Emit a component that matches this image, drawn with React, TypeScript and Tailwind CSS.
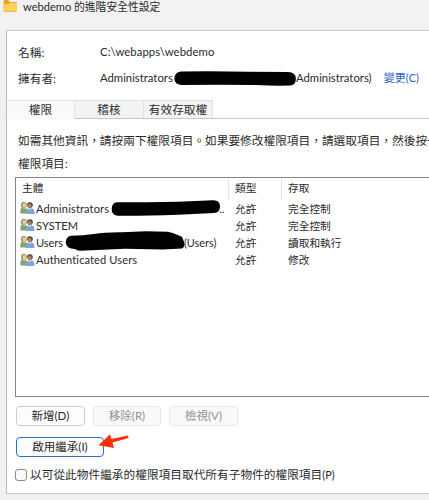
import type { ReactNode } from "react";

const rows = [
  { name: "Administrators", type: "允許", access: "完全控制", spacing: "tracking-[0.12px]" },
  { name: "SYSTEM", type: "允許", access: "完全控制", spacing: "tracking-[0.05px]" },
  { name: "Users", type: "允許", access: "讀取和執行", spacing: "tracking-[-0.1px]" },
  { name: "Authenticated Users", type: "允許", access: "修改", spacing: "tracking-[0.1px]" },
];

function FolderIcon() {
  return (
    <svg width="15" height="14" viewBox="0 0 15 14" className="shrink-0">
      <path d="M0.5 2.2Q0.5 1 1.7 1H5.2L7 3H13Q14 3 14 4V11H0.5Z" fill="#e9a52b" />
      <path d="M0.5 5H5.5L7 3.8H13.2Q14 3.8 14 4.7V12Q14 13 13 13H1.5Q0.5 13 0.5 12Z" fill="#ffd15c" />
      <path d="M1 12.6H13.6" stroke="#eab33d" strokeWidth="0.8" />
    </svg>
  );
}

function UsersIcon() {
  return (
    <svg width="15" height="14" viewBox="0 0 15 14" className="-mt-px shrink-0">
      <path d="M0.4 12.5V9.5Q0.5 6.6 3.5 6.6Q7 6.6 7 9.7V12.5Z" fill="#7ea56f" />
      <path d="M1 5.2Q0.5 0.7 3.9 0.7Q7.2 0.7 6.7 5.2L5.4 7H2.2Z" fill="#9a9668" />
      <ellipse cx="4.3" cy="4.2" rx="1.8" ry="2.5" fill="#e6cc9e" />
      <path d="M3.2 7.1L4.2 8.2L5.1 7.1" fill="#f4e5c8" />
      <path d="M6 13V10.2Q6.2 7.4 9.8 7.3Q14.4 7.2 14.4 10.7V13Z" fill="#7ba6da" />
      <path d="M7.2 4.8Q6.6 1.5 9.5 1.3Q13.2 1 12.8 5L11.5 6.8H8.3Z" fill="#4b4b4b" />
      <ellipse cx="9.6" cy="4.9" rx="2" ry="2.5" fill="#b3805c" />
      <path d="M8.5 7.4L9.7 9.3L11.1 7.4Z" fill="#e4edf8" />
    </svg>
  );
}

function Button({ children, className }: { children: ReactNode; className: string }) {
  return (
    <button className={`flex h-[20px] items-center justify-center rounded-[4px] border pb-px text-[11.5px] ${className}`}>
      {children}
    </button>
  );
}

export default function App() {
  return (
    <div className="flex h-[500px] w-[429px] flex-col overflow-hidden bg-[#f0f0f0] font-['Lato','Noto_Sans_CJK_TC',sans-serif] text-[11.7px] leading-[16px] whitespace-nowrap text-[#2a2a2a]">
      <header className="flex h-[30px] shrink-0 items-start bg-[#f2f2f2] pl-[3px]">
        <div className="-mt-px"><FolderIcon /></div>
        <span className="ml-[5px] -mt-px w-[51px] text-[11.1px]">webdemo</span>
        <span className="-mt-px text-[10.8px]">的進階安全性設定</span>
      </header>

      <main className="ml-[6px] flex h-[464px] w-[423px] shrink-0 flex-col border-y border-l border-y-[#c8c8c8] border-l-[#bdbdbd] bg-white">
        <section className="flex h-[69px] shrink-0 flex-col pt-[13px] pl-[11px]">
          <div className="flex h-[26px]">
            <span className="w-[82px]">名稱:</span>
            <span className="text-[11.3px] tracking-[0.08px]">C:\webapps\webdemo</span>
          </div>
          <div className="flex">
            <span className="w-[82px] shrink-0">擁有者:</span>
            <span className="w-[74px] shrink-0 text-[11.3px]">Administrators</span>
            <svg width="122" height="16" viewBox="174 69 122 16" className="shrink-0">
              <path d="M181 70.5L208 70.3Q248 71 288 71Q295.5 71 295.8 77.5Q296 84 290 84.6Q274 85.1 256 84Q218 83.3 182 84Q174.5 83.6 174.3 77.5Q174.5 71.5 181 70.5Z" fill="#000" />
            </svg>
            <span className="text-[11.3px]">Administrators)</span>
            <a className="ml-auto pr-[10px] text-[11px] text-[#2861c5]">變更(C)</a>
          </div>
        </section>

        <nav className="flex h-[19px] shrink-0 items-stretch border-b border-[#c8c8c8]">
          <div className="-mb-px flex w-[68px] items-center justify-center border-t border-r border-[#e5e5e5] bg-[#fafafa] pb-[2px]">權限</div>
          <div className="flex w-[69px] items-center justify-center border-t border-r border-[#e1e1e1] bg-[#f3f3f3] pb-px">稽核</div>
          <div className="flex w-[69px] items-center justify-center border-t border-r border-[#e1e1e1] bg-[#f3f3f3] pb-px">有效存取權</div>
        </nav>

        <section className="flex flex-col pl-[8px]">
          <p className="mt-[13px] ml-[3px]">如需其他資訊，請按兩下權限項目。如果要修改權限項目，請選取項目，然後按一</p>
          <p className="mt-[7px] ml-[3px]">權限項目:</p>

          <div className="mt-[6px] h-[220px] w-[430px] border border-[#848484] text-[10.7px]">
            <div className="flex h-[22px]">
              <span className="w-[213px] border-r border-[#e5e5e5] pt-[2px] pl-[6px]">主體</span>
              <span className="w-[53px] border-r border-[#e5e5e5] pt-[2px] pl-[6px]">類型</span>
              <span className="pt-[2px] pl-[6px]">存取</span>
            </div>
            {rows.map((row) => (
              <div key={row.name} className="flex h-[17.2px] items-center pl-[4px]">
                <UsersIcon />
                <div className="flex w-[200px] items-center pl-px text-[11.1px]">
                  <span className={row.spacing}>{row.name}</span>
                  {row.name === "Administrators" && (
                    <>
                      <svg width="110" height="17" viewBox="111 198 110 17" className="-mt-[3px] ml-[2px] shrink-0">
                        <path d="M117 201.3Q145 201.3 178 200.8L213 199.2Q220 199 220 205.6Q220 211.7 214 212L178 213.7Q145 215 118 214.8Q111.8 214.5 111.7 208Q111.8 201.8 117 201.3Z" fill="#000" />
                      </svg>
                      <span className="-ml-[2px]">..</span>
                    </>
                  )}
                  {row.name === "Users" && (
                    <>
                      <svg width="120" height="20" viewBox="65 230 120 20" className="-my-[3px] ml-[2px] shrink-0 -translate-y-[2px]">
                        <path d="M71 234.8Q83 234.6 94 233Q105 231 122 231.2L146 230.3L168 230.7Q178 233.4 182 236Q187 245.5 182 247.5L163 248.4L125 247.8L80 249.8Q77 249.7 75 248Q66 247.5 65.7 241.5Q65.8 236 71 234.8Z" fill="#000" />
                      </svg>
                      <span className="-ml-px text-[10.9px]">(Users)</span>
                    </>
                  )}
                </div>
                <span className="w-[53px]">{row.type}</span>
                <span>{row.access}</span>
              </div>
            ))}
          </div>

          <div className="mt-[9px] ml-px flex gap-[8px]">
            <Button className="w-[69px] border-[#cccccc] bg-[#fdfdfd]">新增(D)</Button>
            <Button className="w-[68px] border-[#e8e8e8] bg-[#f9f9f9] text-[#929292]">移除(R)</Button>
            <Button className="w-[69px] border-[#e8e8e8] bg-[#f9f9f9] text-[#929292]">檢視(V)</Button>
          </div>
          <div className="mt-[11px] ml-px flex h-[20px]">
            <Button className="w-[88px] border-[#2673c3] bg-[#fdfdfd]">啟用繼承(I)</Button>
            <svg width="32" height="16" viewBox="98 434 32 16" className="-mt-[4px] -ml-[6px]">
              <path d="M98.5 446.2L110 435.3L111.4 440L128 436.5L128.5 439L112.5 443.6L114 449Z" fill="#fb3009" />
            </svg>
          </div>
          <label className="mt-[9px] flex items-center">
            <span className="h-[12px] w-[12px] rounded-[3px] border border-[#898989] bg-[#f9f9f9]" />
            <span className="ml-[3px]">以可從此物件繼承的權限項目取代所有子物件的權限項目<span className="text-[11px]">(P)</span></span>
          </label>
        </section>
      </main>
    </div>
  );
}
